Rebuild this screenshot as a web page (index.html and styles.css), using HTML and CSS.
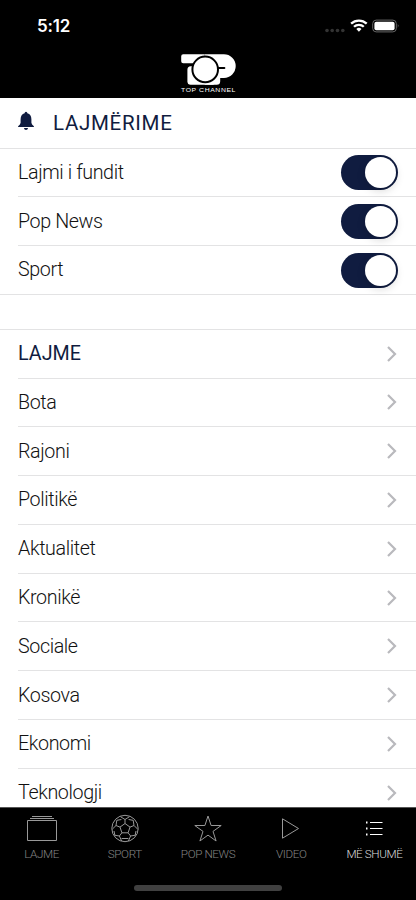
FILE: index.html
```
<!DOCTYPE html>
<html lang="sq">
<head>
<meta charset="utf-8">
<meta name="viewport" content="width=device-width, initial-scale=1">
<title>Top Channel</title>
<link rel="stylesheet" href="styles.css">
</head>
<body>
<div class="app">
  <header class="header">
    <div class="status">
      <span class="time">5:12</span>
      <svg class="status-icons" width="76" height="16" viewBox="0 0 76 16">
        <g fill="#333"><circle cx="3" cy="11.500" r="1.800"/><circle cx="8.2" cy="11.500" r="1.800"/><circle cx="13.5" cy="11.500" r="1.800"/><circle cx="18.8" cy="11.500" r="1.800"/></g>
        <g fill="none" stroke="#fff" stroke-width="2.3"><path d="M27.1 4.700a11.2 11.2 0 0 1 15.6 0"/><path d="M30 7.800a7 7 0 0 1 9.8 0"/></g>
        <path d="M32.3 10a3.9 3.9 0 0 1 5.2 0l-2.6 2.7z" fill="#fff"/>
        <rect x="48.7" y="1.1" width="23.6" height="11.8" rx="3.5" fill="none" stroke="#666"/>
        <rect x="50.4" y="2.8" width="20.2" height="8.4" rx="2" fill="#fff"/>
        <path d="M73.800 5.1q1.500 1.800 0 3.700z" fill="#777"/>
      </svg>
    </div>
    <div class="brand">
      <svg width="56" height="41" viewBox="0 0 56 41">
        <g transform="translate(.7 .8)">
          <g fill="#fff">
            <path d="M2 .5H24V9.500H2.500Q.5 9.500.5 7.500V2.500Q.5.5 2.500.5Z"/>
            <path d="M10 12.500H33V31H10Q6.700 31 6.700 27.500V16Q6.700 12.500 10 12.500Z"/>
            <path d="M24 .5H43.200a11.700 11.700 0 0 1 0 23.600H39.500V27.500Q39.500 31 36 31H24Z"/>
          </g>
          <circle cx="24.500" cy="15.600" r="12.800" fill="#fff" stroke="#000" stroke-width="2"/>
          <path d="M37 13.100H43.700a1 1 0 0 1 0 2H37Z" fill="#000"/>
        </g>
        <text class="brand-name" x="1" y="38.500" textLength="55" lengthAdjust="spacingAndGlyphs">TOP CHANNEL</text>
      </svg>
    </div>
  </header>

  <main class="content">
    <div class="section-title">
      <svg width="18" height="20" viewBox="0 0 18 20"><path d="M9 .8q1.300 0 1.400 1.500Q14.300 3.500 14.400 8.200V11.800Q14.500 13.500 16.900 15.200V16H1.100V15.200Q3.500 13.500 3.600 11.800V8.200Q3.700 3.500 7.600 2.300 7.700.8 9 .8ZM6.900 17H11.100Q10.700 18.900 9 18.900T6.900 17Z" fill="#101c40"/></svg>
      <h1>LAJMËRIME</h1>
    </div>
    <div class="row"><span>Lajmi i fundit</span><i class="switch"></i></div>
    <div class="row"><span>Pop News</span><i class="switch"></i></div>
    <div class="row last"><span>Sport</span><i class="switch"></i></div>
    <div class="spacer"></div>
    <div class="row heading"><span>LAJME</span><svg class="chevron" viewBox="0 0 10 16"><path d="m1 1 7 7-7 7"/></svg></div>
    <div class="row"><span>Bota</span><svg class="chevron" viewBox="0 0 10 16"><path d="m1 1 7 7-7 7"/></svg></div>
    <div class="row"><span>Rajoni</span><svg class="chevron" viewBox="0 0 10 16"><path d="m1 1 7 7-7 7"/></svg></div>
    <div class="row"><span>Politikë</span><svg class="chevron" viewBox="0 0 10 16"><path d="m1 1 7 7-7 7"/></svg></div>
    <div class="row"><span>Aktualitet</span><svg class="chevron" viewBox="0 0 10 16"><path d="m1 1 7 7-7 7"/></svg></div>
    <div class="row"><span>Kronikë</span><svg class="chevron" viewBox="0 0 10 16"><path d="m1 1 7 7-7 7"/></svg></div>
    <div class="row"><span>Sociale</span><svg class="chevron" viewBox="0 0 10 16"><path d="m1 1 7 7-7 7"/></svg></div>
    <div class="row"><span>Kosova</span><svg class="chevron" viewBox="0 0 10 16"><path d="m1 1 7 7-7 7"/></svg></div>
    <div class="row"><span>Ekonomi</span><svg class="chevron" viewBox="0 0 10 16"><path d="m1 1 7 7-7 7"/></svg></div>
    <div class="row"><span>Teknologji</span><svg class="chevron" viewBox="0 0 10 16"><path d="m1 1 7 7-7 7"/></svg></div>
  </main>

  <footer class="footer">
    <nav class="tabs">
      <a class="tab"><svg viewBox="0 0 32 32"><path d="M1.500 8.500H30.500V28.500H1.500ZM4 6.500H28M6 4.500H26"/></svg><span>LAJME</span></a>
      <a class="tab"><svg viewBox="0 0 32 32"><circle cx="16" cy="16.500" r="13.200"/><path d="m16 11.500 5 3.600-1.900 5.700h-6.200L11 15.100ZM16 11.500V7.500M21 15.100l4-1.600M19.100 20.800l2.500 3.200M12.900 20.800 10.400 24M11 15.100l-4-1.600M16 7.500 11.500 4.700M16 7.500l4.500-2.800M25 13.500l-.8-5.200M25 13.500l3.800 3.800M21.600 24l5-.8M21.600 24l-2.200 5M10.400 24l2.200 5M10.400 24l-5-.8M7 13.500l-3.800 3.800M7 13.500l.8-5.200M12.600 26.500h6.800M7.800 8.300l4.600-.8M24.200 8.300l-4.600-.8M5 19l.8 4M27 19l-.8 4"/></svg><span>SPORT</span></a>
      <a class="tab"><svg viewBox="0 0 32 32"><path d="m16 4 3.100 9.500h10.100L21 19.400l3.100 9.600L16 23.100 7.900 29 11 19.400 2.800 13.500h10.100Z"/></svg><span>POP NEWS</span></a>
      <a class="tab"><svg viewBox="0 0 32 32"><path d="M7.500 6.800V26.200L23.500 16.500Z"/></svg><span>VIDEO</span></a>
      <a class="tab active"><svg viewBox="0 0 32 32"><path d="M12 10.500H24.500M12 16.500H24.500M12 22.500H24.500"/><path class="dots" d="M8 10.500h1.500M8 16.500h1.500M8 22.500h1.500"/></svg><span>MË SHUMË</span></a>
    </nav>
    <div class="home-indicator"></div>
  </footer>
</div>
</body>
</html>
```
FILE: styles.css
```
* { box-sizing: border-box; }

body {
  margin: 0;
  background: #fff;
  font-family: Roboto, "Liberation Sans", sans-serif;
  color: #111;
}

.app {
  display: flex;
  flex-direction: column;
  width: 416px;
  height: 900px;
  overflow: hidden;
}

.header {
  flex: none;
  height: 97.5px;
  background: #000;
}

.status {
  display: flex;
  justify-content: space-between;
  align-items: center;
  height: 53px;
  padding: 0 16px 0 37px;
}

.time {
  margin-top: -1px;
  color: #fff;
  font: 600 17px/20px Inter, sans-serif;
  letter-spacing: -0.2px;
}

.status-icons { display: block; }

.brand {
  display: flex;
  justify-content: center;
}

.brand svg {
  display: block;
  overflow: visible;
}

.brand-name {
  fill: #fff;
  font: 400 5.500px "Liberation Sans", sans-serif;
  letter-spacing: 0.5px;
}

.content {
  flex: 1;
  min-height: 0;
  overflow: hidden;
}

.section-title {
  display: flex;
  align-items: center;
  gap: 18px;
  height: 51px;
  padding: 0 17px;
  border-bottom: 1px solid #e3e3e4;
}

.section-title svg { margin-top: -3px; }

h1 {
  margin: 0;
  color: #101c40;
  font-size: 20.500px;
  font-weight: 400;
  letter-spacing: 0.7px;
}

.row {
  display: flex;
  align-items: center;
  justify-content: space-between;
  height: 48.770px;
  margin-left: 18px;
  padding-right: 18px;
  border-bottom: 1px solid #e3e3e4;
  font-size: 19.700px;
  font-weight: 300;
  letter-spacing: -0.400px;
}

.row.last {
  margin-left: 0;
  padding-left: 18px;
}

.row.heading {
  color: #101c40;
  font-weight: 400;
  letter-spacing: 0;
}

.spacer {
  height: 35px;
  border-bottom: 1px solid #e3e3e4;
}

.switch {
  display: flex;
  justify-content: flex-end;
  width: 57px;
  height: 35px;
  margin-top: 1px;
  padding: 2px;
  border-radius: 18px;
  background: #101c40;
}

.switch::after {
  content: "";
  width: 31px;
  height: 31px;
  border-radius: 50%;
  background: #fff;
  box-shadow: 0 3px 8px rgba(0, 0, 0, 0.15);
}

.chevron {
  width: 10px;
  height: 16px;
  margin-right: 1px;
  fill: none;
  stroke: #b9b9bd;
  stroke-width: 2.200;
}

.footer {
  flex: none;
  height: 93px;
  border-top: 1px solid #555;
  background: #000;
}

.tabs {
  display: flex;
  height: 77px;
}

.tab {
  display: flex;
  flex: 1;
  flex-direction: column;
  align-items: center;
  padding-top: 4px;
  color: #858585;
  font-size: 11.700px;
  font-weight: 300;
  letter-spacing: -0.400px;
  line-height: 14px;
  white-space: nowrap;
}

.tab svg {
  width: 32px;
  height: 32px;
  margin-bottom: 3px;
  fill: none;
  stroke: #999;
  stroke-width: 1;
}

.tab.active { color: #ddd; }
.tab.active svg { stroke: #fff; }
.tab .dots { stroke-width: 2; }

.home-indicator {
  width: 148px;
  height: 6px;
  margin: 0 auto;
  border-radius: 3px;
  background: #404040;
}
```
